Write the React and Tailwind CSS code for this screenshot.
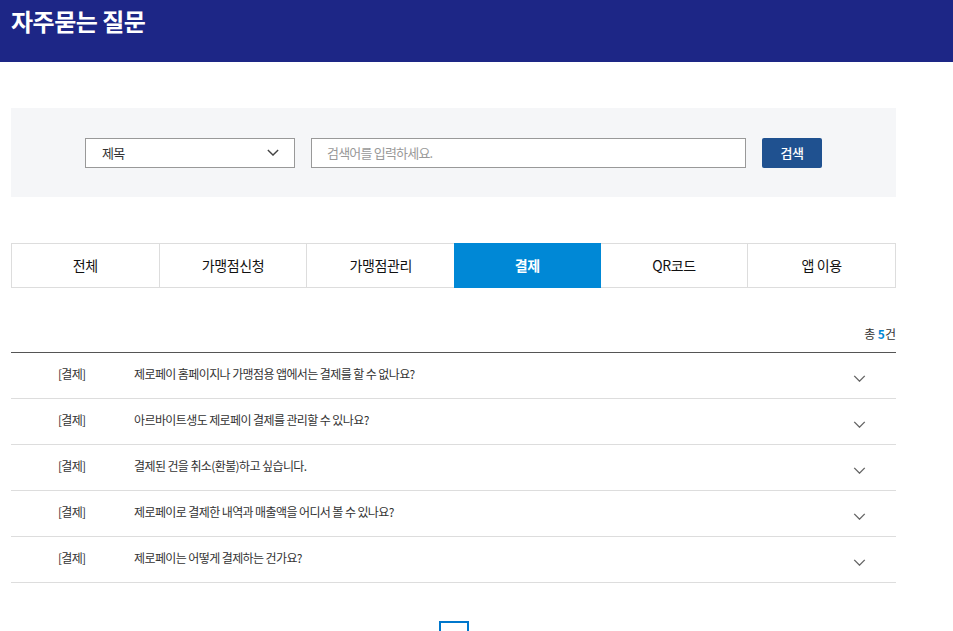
import React from "react";

const tabs = ["전체", "가맹점신청", "가맹점관리", "결제", "QR코드", "앱 이용"];
const items = [
  "제로페이 홈페이지나 가맹점용 앱에서는 결제를 할 수 없나요?",
  "아르바이트생도 제로페이 결제를 관리할 수 있나요?",
  "결제된 건을 취소(환불)하고 싶습니다.",
  "제로페이로 결제한 내역과 매출액을 어디서 볼 수 있나요?",
  "제로페이는 어떻게 결제하는 건가요?",
];

function Chevron({ className, stroke = "#555" }) {
  return (
    <svg className={className} viewBox="0 0 14 8" fill="none">
      <path d="M1 1l6 6 6-6" stroke={stroke} strokeWidth="1.6" />
    </svg>
  );
}

export default function App() {
  return (
    <div
      className="w-[953px] h-[631px] overflow-hidden bg-white text-[#222]"
      style={{ fontFamily: '"Noto Sans CJK KR", "Noto Sans", sans-serif' }}
    >
      <header className="h-[62px] bg-[#1d2686] px-[11px] pt-[3px]">
        <h1 className="text-[24px] font-bold text-white leading-[36px] tracking-[-0.5px]">자주묻는 질문</h1>
      </header>

      <main className="ml-[11px] w-[885px]">
        <div className="mt-[46px] h-[89px] bg-[#f5f6f8] flex items-center justify-center gap-[16px]">
          <div className="w-[210px] h-[30px] bg-white border border-[#999] flex items-center justify-between pl-[16px] pr-[15px]">
            <span className="text-[13px] text-[#333] tracking-[-0.6px]">제목</span>
            <Chevron className="w-[12px] h-[7px]" stroke="#444" />
          </div>
          <div className="w-[435px] h-[30px] bg-white border border-[#999] flex items-center pl-[15px]">
            <span className="text-[13px] text-[#999] tracking-[-0.8px]">검색어를 입력하세요.</span>
          </div>
          <button className="w-[60px] h-[30px] rounded-[2px] bg-[#1f5190] text-white text-[13px] font-medium tracking-[-0.5px]">검색</button>
        </div>

        <div className="mt-[46px] flex border border-[#ddd] h-[45px]">
          {tabs.map((t, i) => (
            <div
              key={t}
              className={
                "flex-1 flex items-center justify-center text-[14px] tracking-[-0.4px] " +
                (i > 0 && i !== 3 && i !== 4 ? "border-l border-[#ddd] " : "") +
                (i === 3 ? "bg-[#0088d6] text-white font-bold -mt-px h-[45px]" : "text-[#111]")
              }
            >
              {t}
            </div>
          ))}
        </div>

        <div className="mt-[37px] flex justify-end text-[12px] leading-[18px] text-[#333]">
          <span>
            총 <span className="text-[#0088d6] font-bold">5</span>건
          </span>
        </div>

        <ul className="mt-[9px] border-t border-[#555]">
          {items.map((q) => (
            <li key={q} className="h-[46px] border-b border-[#ddd] flex items-center">
              <span className="w-[123px] pl-[47px] pb-[3px] text-[12px] text-[#333] tracking-[-0.7px]">[결제]</span>
              <span className="flex-1 pb-[3px] text-[12px] text-[#333] tracking-[-0.6px]">{q}</span>
              <Chevron className="w-[13px] h-[7px] mr-[30px] mt-[6px]" stroke="#666" />
            </li>
          ))}
        </ul>

        <div className="mt-[38px] flex justify-center">
          <div className="w-[30px] h-[30px] border-2 border-[#0077cc]" />
        </div>
      </main>
    </div>
  );
}
